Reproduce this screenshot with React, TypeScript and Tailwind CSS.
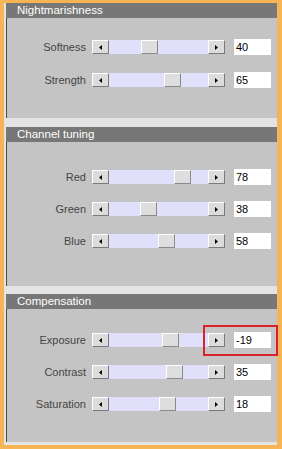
import type { CSSProperties } from 'react';

type Row = { label: string; value: string; thumb: number; highlight?: boolean };

type Section = { title: string; pt: string; gap: string; pb: string; rows: Row[] };

const sections: Section[] = [
  {
    title: 'Nightmarishness',
    pt: 'pt-[22px]',
    gap: 'gap-[19px]',
    pb: 'pb-[31px]',
    rows: [
      { label: 'Softness', value: '40', thumb: 32 },
      { label: 'Strength', value: '65', thumb: 55 },
    ],
  },
  {
    title: 'Channel tuning',
    pt: 'pt-[28px]',
    gap: 'gap-[18px]',
    pb: 'pb-[38px]',
    rows: [
      { label: 'Red', value: '78', thumb: 65 },
      { label: 'Green', value: '38', thumb: 31 },
      { label: 'Blue', value: '58', thumb: 49 },
    ],
  },
  {
    title: 'Compensation',
    pt: 'pt-[24px]',
    gap: 'gap-[18px]',
    pb: 'pb-[31px]',
    rows: [
      { label: 'Exposure', value: '-19', thumb: 53, highlight: true },
      { label: 'Contrast', value: '35', thumb: 57 },
      { label: 'Saturation', value: '18', thumb: 50 },
    ],
  },
];

function ArrowButton({ dir }: { dir: 'left' | 'right' }) {
  return (
    <div className="flex h-[14px] w-[17px] shrink-0 items-center justify-center border border-t-white border-l-white border-r-[#7a7a7a] border-b-[#7a7a7a] bg-[#dcdcdc]">
      <svg width="3" height="5" viewBox="0 0 3 5">
        {dir === 'left' ? <path d="M3 0 L0 2.5 L3 5 Z" fill="#000" /> : <path d="M0 0 L3 2.5 L0 5 Z" fill="#000" />}
      </svg>
    </div>
  );
}

function SliderRow({ row }: { row: Row }) {
  const thumbStyle: CSSProperties = { left: row.thumb };
  return (
    <div className="relative flex h-[14px] items-center">
      <span className="w-[79px] text-right text-[11px] leading-none text-[#444444]">{row.label}</span>
      <div className="ml-[6px] flex items-center">
        <ArrowButton dir="left" />
        <div className="relative h-[14px] w-[99px] bg-[#e0e0fb]">
          <div
            className="absolute top-0 h-[14px] w-[17px] border border-t-white border-l-white border-r-[#8a8a8a] border-b-[#8a8a8a] bg-[#dedede]"
            style={thumbStyle}
          />
        </div>
        <ArrowButton dir="right" />
      </div>
      <div className="ml-[9px] flex h-[16px] w-[37px] items-center bg-white pl-[2px] text-[11px] leading-none text-black">
        {row.value}
      </div>
      {row.highlight && (
        <div className="absolute top-[-8px] left-[196px] h-[31px] w-[75px] border-2 border-[#d8232a]" />
      )}
    </div>
  );
}

export default function App() {
  return (
    <div
      className="h-[449px] w-[282px] bg-[#f6b455] pt-[3px] pr-[5px] pb-[4px] pl-[4px]"
      style={{ fontFamily: '"Liberation Sans", Arial, sans-serif' }}
    >
      <div className="flex h-full flex-col gap-[9px] bg-[#e4e4e4] pb-[3px] pl-[2px]">
        {sections.map((s, i) => (
          <div key={s.title} className={`flex flex-col bg-[#c4c4c4] ${i === 2 ? '-mt-[1px]' : ''}`}>
            <div className="flex h-[15px] items-center bg-[#777777] pl-[11px] text-[11.5px] leading-none text-white">
              {s.title}
            </div>
            <div className={`flex flex-col border-l border-[#4d4d4d] ${s.pt} ${s.gap} ${s.pb}`}>
              {s.rows.map((r) => (
                <SliderRow key={r.label} row={r} />
              ))}
            </div>
          </div>
        ))}
      </div>
    </div>
  );
}
